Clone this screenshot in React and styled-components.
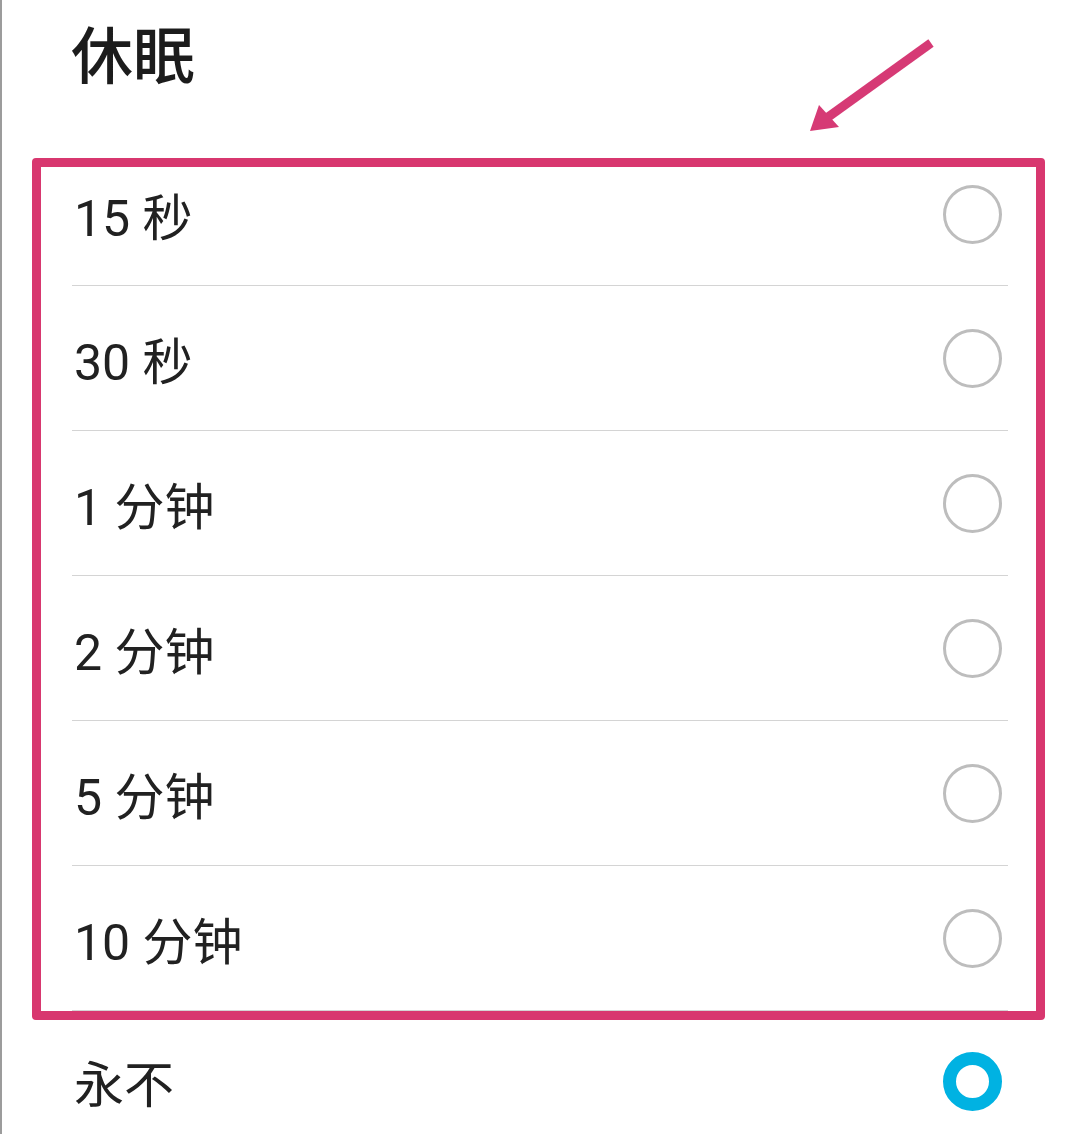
import React from "react";
import styled, { createGlobalStyle } from "styled-components";

const GlobalStyle = createGlobalStyle`
  body {
    margin: 0;
    background: #ffffff;
    font-family: Roboto, "Noto Sans CJK SC", sans-serif;
  }
`;

const Page = styled.div`
  position: relative;
  min-height: 1134px;
  border-left: 2px solid #9c9c9c;
  background: #ffffff;
  overflow: hidden;
`;

const Title = styled.h1`
  margin: 0;
  padding: 27px 0 0 69px;
  height: 158px;
  box-sizing: border-box;
  font-size: 62px;
  line-height: 62px;
  font-weight: 500;
  color: #1c1c1c;
`;

const Frame = styled.div`
  margin-left: 30px;
  width: 1013px;
  box-sizing: border-box;
  border: 9px solid #d8376f;
  border-radius: 4px;
`;

const Row = styled.div`
  display: flex;
  align-items: center;
  justify-content: space-between;
  box-sizing: border-box;
  height: ${(p) => p.$height || 145}px;
  padding-bottom: ${(p) => p.$shift || 0}px;
  margin: 0 ${(p) => p.$right || 28}px 0 ${(p) => p.$left || 31}px;
  border-bottom: ${(p) => (p.$line ? "1px solid #d4d4d4" : "none")};
`;

const Label = styled.span`
  padding-left: 2px;
  font-size: 50px;
  color: #212121;
`;

const Radio = styled.span`
  width: 59px;
  height: 59px;
  margin-right: 6px;
  box-sizing: border-box;
  border-radius: 50%;
  border: ${(p) => (p.$checked ? "13px solid #00b2e2" : "3px solid #bdbdbd")};
`;

const Arrow = styled.svg`
  position: absolute;
  top: 0;
  left: 0;
  pointer-events: none;
`;

const options = ["15 秒", "30 秒", "1 分钟", "2 分钟", "5 分钟", "10 分钟"];

export default function App() {
  return (
    <Page>
      <GlobalStyle />
      <Title>休眠</Title>
      <Frame>
        {options.map((o, i) => (
          <Row key={o} $line $height={i === 0 ? 119 : 145} $shift={i === 0 ? 24 : 0}>
            <Label>{o}</Label>
            <Radio />
          </Row>
        ))}
      </Frame>
      <Row $height={122} $left={70} $right={72}>
        <Label>永不</Label>
        <Radio $checked />
      </Row>
      <Arrow width="1080" height="160" viewBox="0 0 1080 160">
        <line x1="929" y1="43" x2="822" y2="120" stroke="#d63a75" strokeWidth="9" strokeLinecap="butt" />
        <polygon points="808,131 817,105 837,127" fill="#d63a75" />
      </Arrow>
    </Page>
  );
}
